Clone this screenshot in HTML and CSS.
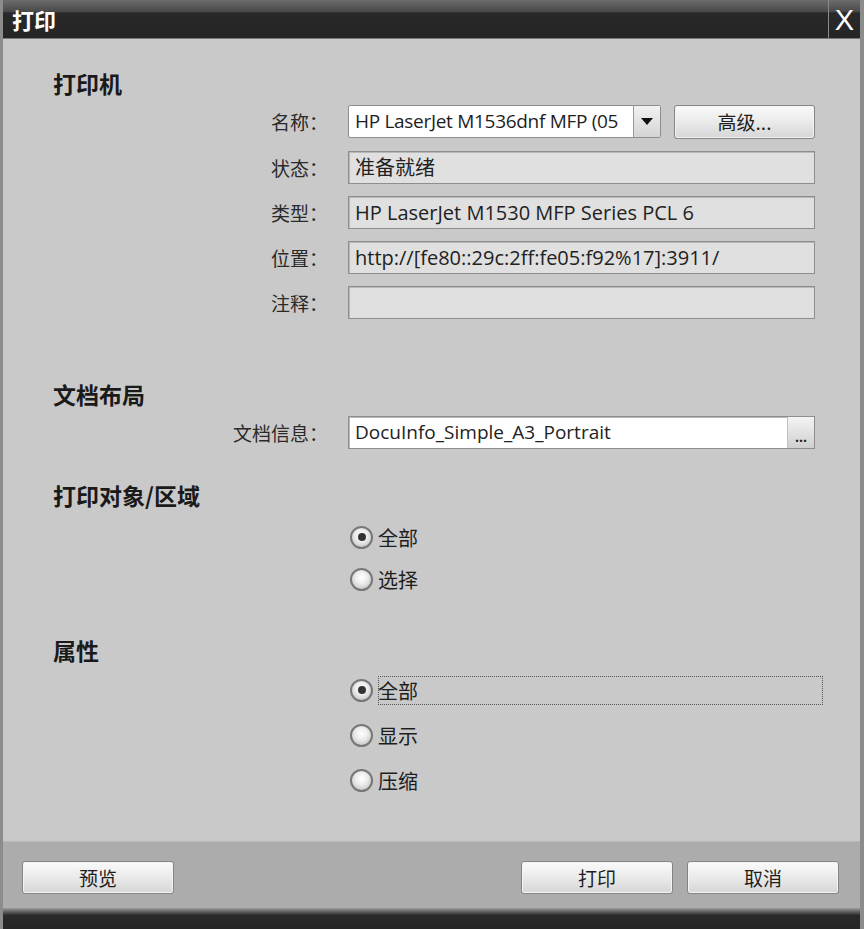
FILE: index.html
```html
<html>
<head>
<meta charset="utf-8">
<title>打印</title>
<link rel="stylesheet" href="styles.css">
</head>
<body>
<div class="dialog">
	<div class="titlebar">
		<span class="title">打印</span>
		<span class="close">X</span>
	</div>

	<div class="content">
		<div class="heading">打印机</div>
		<div class="form">
			<div class="label">名称：</div>
			<div class="namerow">
				<div class="combo">
					<span class="combo-text">HP LaserJet M1536dnf MFP (05</span>
					<span class="combo-arrow"><span class="tri"></span></span>
				</div>
				<div class="btn adv">高级...</div>
			</div>

			<div class="label">状态：</div>
			<div class="field ro">准备就绪</div>

			<div class="label">类型：</div>
			<div class="field ro">HP LaserJet M1530 MFP Series PCL 6</div>

			<div class="label">位置：</div>
			<div class="field ro">http://[fe80::29c:2ff:fe05:f92%17]:3911/</div>

			<div class="label">注释：</div>
			<div class="field ro"></div>
		</div>

		<div class="heading layout">文档布局</div>
		<div class="form">
			<div class="label">文档信息：</div>
			<div class="field docinfo">
				<span>DocuInfo_Simple_A3_Portrait</span>
				<span class="dots">...</span>
			</div>
		</div>

		<div class="heading objects">打印对象/区域</div>
		<div class="radios group1">
			<div class="radio-row"><span class="radio checked"></span><span class="rlabel">全部</span></div>
			<div class="radio-row"><span class="radio"></span><span class="rlabel">选择</span></div>
		</div>

		<div class="heading props">属性</div>
		<div class="radios group2">
			<div class="radio-row"><span class="radio checked"></span><span class="rlabel focus">全部</span></div>
			<div class="radio-row"><span class="radio"></span><span class="rlabel">显示</span></div>
			<div class="radio-row"><span class="radio"></span><span class="rlabel">压缩</span></div>
		</div>
	</div>

	<div class="footer">
		<div class="btn foot">预览</div>
		<div class="spacer"></div>
		<div class="btn foot">打印</div>
		<div class="btn foot">取消</div>
	</div>
	<div class="bottombar"></div>
</div>
</body>
</html>
```

FILE: styles.css
```css
body {
  margin: 0;
  background: #8a8a8a;
  font-family: "Noto Sans CJK SC", "Open Sans", sans-serif;
  color: #1e1e1e;
}

.dialog {
  width: 864px;
  height: 929px;
  display: flex;
  flex-direction: column;
  box-sizing: border-box;
  border-left: 3px solid #8c8c8c;
  border-right: 4px solid #8c8c8c;
  box-shadow: inset 1px 0 0 #6a6a6a, inset -1px 0 0 #6a6a6a;
}

.titlebar {
  height: 38px;
  flex: none;
  display: flex;
  align-items: center;
  background: linear-gradient(#6c6c6c 0, #4a4a4a 30%, #292929 34%, #252525 100%);
  border-bottom: 1px solid #7a7a7a;
  color: white;
}

.title {
  flex: 1;
  padding-left: 9px;
  font-size: 22px;
  font-weight: 700;
  line-height: 38px;
}

.close {
  width: 31px;
  height: 38px;
  border-left: 1px solid #8a8a8a;
  text-align: center;
  font-family: "Liberation Sans", sans-serif;
  font-size: 29px;
  line-height: 40px;
}

.content {
  flex: 1;
  background: #c9c9c9;
  padding: 30px 45px 0 50px;
}

.heading {
  font-size: 23px;
  font-weight: 700;
  line-height: 28px;
  color: #1a1a1a;
}

.layout { margin-top: 61px; }
.objects { margin-top: 32px; }
.props { margin-top: 42px; }

.form {
  display: grid;
  grid-template-columns: 275px 1fr;
  column-gap: 20px;
  row-gap: 12px;
  margin-top: 8px;
}

.label {
  text-align: right;
  font-size: 19px;
  line-height: 33px;
  color: #2a2a2a;
}

.field {
  height: 33px;
  box-sizing: border-box;
  border: 1px solid #8e8e8e;
  box-shadow: inset 1px 1px 0 #b8b8b8;
  font-family: "Open Sans", "Noto Sans CJK SC", sans-serif;
  font-size: 20px;
  line-height: 31px;
  padding-left: 6px;
  color: #222;
  white-space: nowrap;
  overflow: hidden;
}

.ro {
  background: #e0e0e0;
}

.namerow {
  display: flex;
  gap: 13px;
}

.combo {
  width: 311px;
  height: 31px;
  display: flex;
  border: 1px solid #8e8e8e;
  border-radius: 2px;
  background: white;
}

.combo-text {
  flex: 1;
  overflow: hidden;
  white-space: nowrap;
  padding-left: 6px;
  font-family: "Open Sans", sans-serif;
  font-size: 19px;
  letter-spacing: -0.3px;
  line-height: 31px;
}

.combo-arrow {
  width: 26px;
  border-left: 1px solid #9a9a9a;
  background: linear-gradient(#f2f2f2, #d4d4d4);
  display: flex;
  align-items: center;
  justify-content: center;
}

.tri {
  width: 0;
  height: 0;
  border-left: 6px solid transparent;
  border-right: 6px solid transparent;
  border-top: 7px solid #111;
}

.btn {
  box-sizing: border-box;
  border: 1px solid #858585;
  border-radius: 3px;
  background: linear-gradient(#fafafa 0, #ececec 45%, #d6d6d6 100%);
  box-shadow: inset 0 0 0 1px #f4f4f4;
  text-align: center;
  font-size: 19px;
  color: #1e1e1e;
}

.adv {
  flex: 1;
  height: 34px;
  line-height: 32px;
}

.docinfo {
  background: white;
  display: flex;
  padding-right: 0;
  font-family: "Open Sans", sans-serif;
  font-size: 19px;
}

.docinfo span:first-child { flex: 1; }

.dots {
  width: 26px;
  background: linear-gradient(#f4f4f4, #cfcfcf);
  border-left: 1px solid #c0c0c0;
  text-align: center;
  font-weight: 700;
  font-size: 14px;
  line-height: 40px;
}

.radios {
  display: flex;
  flex-direction: column;
  padding-left: 297px;
}

.group1 { margin-top: 13px; gap: 12px; }
.group2 { margin-top: 11px; gap: 15px; }

.radio-row {
  display: flex;
  align-items: center;
  height: 30px;
  gap: 5px;
}

.radio {
  width: 23px;
  height: 23px;
  flex: none;
  box-sizing: border-box;
  border-radius: 50%;
  border: 2px solid #777;
  background: radial-gradient(circle at 50% 40%, #ffffff 0, #ededed 40%, #b5b5b5 100%);
  display: flex;
  align-items: center;
  justify-content: center;
}

.radio.checked::after {
  content: "";
  width: 8px;
  height: 8px;
  border-radius: 50%;
  background: #333;
}

.rlabel {
  font-size: 20px;
  line-height: 29px;
  color: #1e1e1e;
}

.focus {
  width: 445px;
  flex: none;
  outline: 1px dotted #555;
  outline-offset: -1px;
}

.footer {
  height: 67px;
  flex: none;
  background: #acacac;
  border-top: 1px solid #b8b8b8;
  display: flex;
  align-items: flex-start;
  padding: 19px 21px 0 19px;
  gap: 14px;
  box-sizing: border-box;
}

.spacer { flex: 1; }

.foot {
  width: 152px;
  height: 33px;
  line-height: 31px;
}

.bottombar {
  height: 21px;
  flex: none;
  background: linear-gradient(#9a9a9a 0, #5a5a5a 20%, #2a2a2a 35%, #262626 100%);
}
```
